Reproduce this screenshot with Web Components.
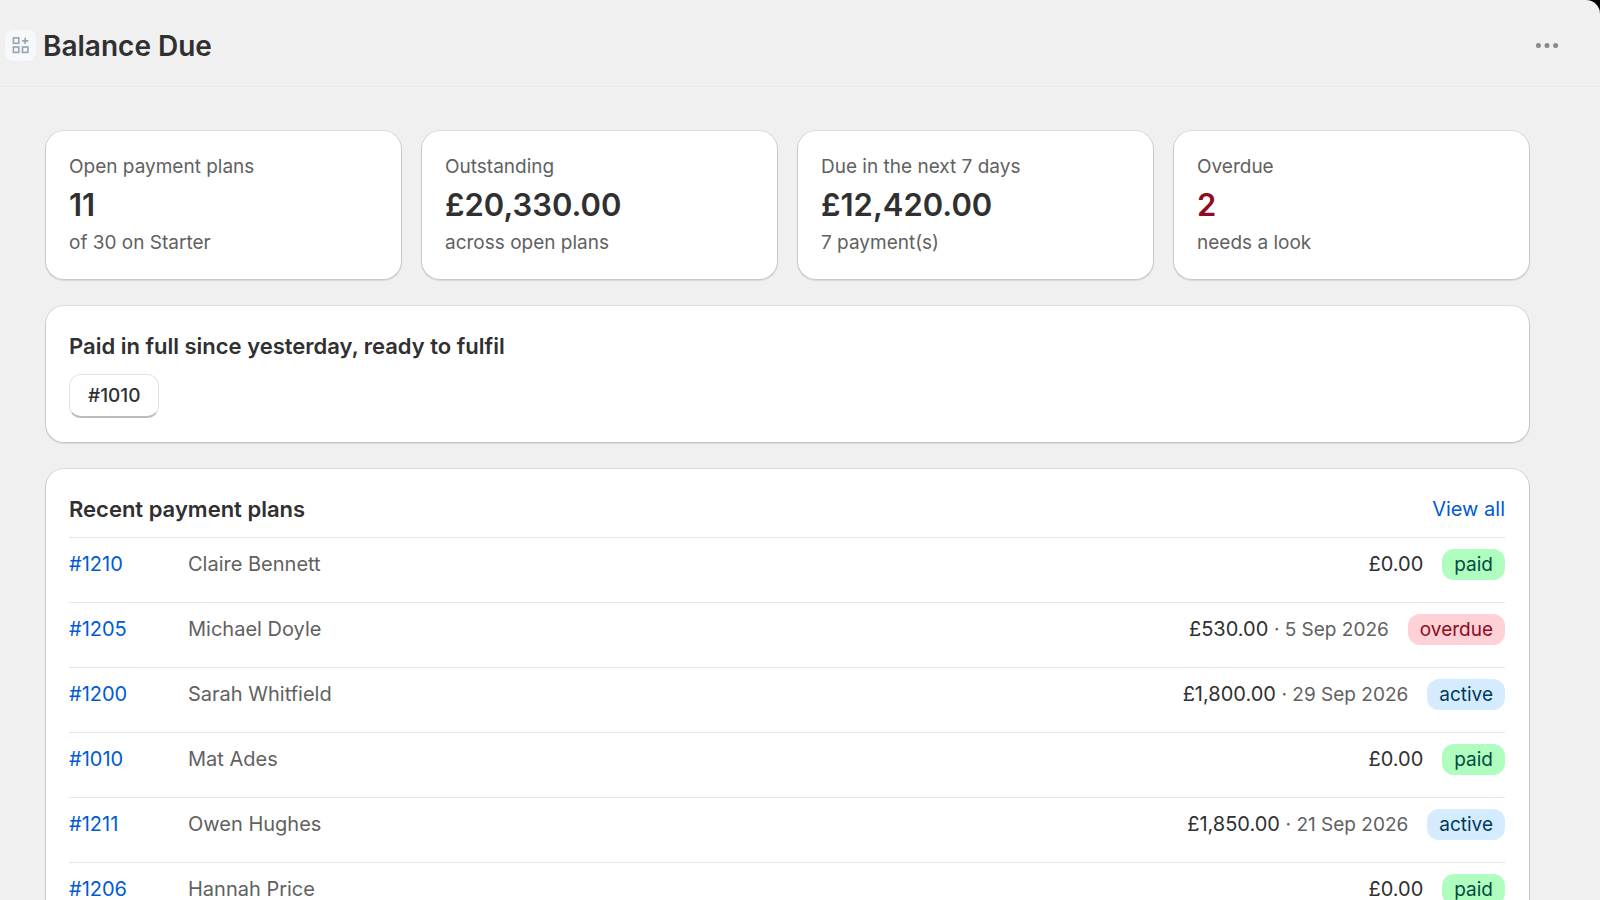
<!DOCTYPE html>
<html lang="en">
<head>
  <meta charset="UTF-8">
  <meta name="viewport" content="width=device-width, initial-scale=1.0">
  <title>Balance Due</title>
  <style>
    :root {
      --bg: #f0f0f0;
      --surface: #fff;
      --text: #303030;
      --text-subdued: #616161;
      --text-critical: #8e0b21;
      --link: #005bd3;
      --divider: #e6e6e6;
    }
    body {
      margin: 0;
      background: #000;
      color: var(--text);
      font-family: Inter, "Liberation Sans", sans-serif;
      font-size: 20px;
      line-height: 32px;
    }
  </style>
</head>
<body>
  <app-frame>
    <title-bar slot="header">Balance Due</title-bar>
    <stat-grid>
      <stat-card label="Open payment plans" note="of 30 on Starter">11</stat-card>
      <stat-card label="Outstanding" note="across open plans">£20,330.00</stat-card>
      <stat-card label="Due in the next 7 days" note="7 payment(s)">£12,420.00</stat-card>
      <stat-card label="Overdue" note="needs a look" tone="critical">2</stat-card>
    </stat-grid>
    <section-card heading="Paid in full since yesterday, ready to fulfil">
      <order-button>#1010</order-button>
    </section-card>
    <section-card heading="Recent payment plans">
      <text-link slot="action" to="#plans">View all</text-link>
      <plans-table></plans-table>
    </section-card>
  </app-frame>

  <template id="appFrameTemplate">
    <style>
      :host {
        display: flex;
        flex-direction: column;
        height: 100vh;
        overflow: hidden;
        background: var(--bg);
        border-top-right-radius: 14px;
      }
      main {
        flex: 1;
        min-height: 0;
        display: flex;
        flex-direction: column;
        gap: 27px;
        padding: 44px 71px 44px 46px;
        overflow-y: auto;
        scrollbar-width: none;
      }
    </style>
    <slot name="header"></slot>
    <main><slot></slot></main>
  </template>

  <template id="titleBarTemplate">
    <style>
      :host {
        display: block;
      }
      header {
        display: flex;
        align-items: center;
        gap: 7px;
        height: 86px;
        padding: 0 37px 0 5px;
        border-bottom: 1px solid #e8e8e8;
      }
      .app-icon {
        display: flex;
        align-items: center;
        justify-content: center;
        width: 31px;
        height: 31px;
        margin-top: 5px;
        border-radius: 8px;
        background: #f6f8fa;
      }
      h1 {
        flex: 1;
        margin: 5px 0 0;
        font-size: 28px;
        font-weight: 600;
        line-height: 36px;
      }
      button {
        display: flex;
        margin: 5px 0 0;
        padding: 8px 4px;
        border: 0;
        background: none;
        cursor: pointer;
      }
    </style>
    <header>
      <span class="app-icon">
        <svg width="19" height="19" viewBox="0 0 19 19" fill="none" stroke="#97a3b4" stroke-width="1.6">
          <rect x="2.4" y="1.9" width="5.4" height="5.4"/>
          <rect x="2.4" y="11" width="5.4" height="5.4"/>
          <rect x="11.5" y="11" width="5.4" height="5.4"/>
          <path d="M14.2 1.8v6.2M11.1 4.9h6.2"/>
        </svg>
      </span>
      <h1><slot></slot></h1>
      <button type="button" aria-label="More actions">
        <svg width="24" height="6" viewBox="0 0 24 6" fill="#8a8a8a">
          <circle cx="3.4" cy="2.6" r="2.5"/>
          <circle cx="12" cy="2.6" r="2.5"/>
          <circle cx="20.6" cy="2.6" r="2.5"/>
        </svg>
      </button>
    </header>
  </template>

  <template id="statGridTemplate">
    <style>
      :host {
        display: grid;
        grid-template-columns: repeat(4, 1fr);
        gap: 21px;
      }
    </style>
    <slot></slot>
  </template>

  <template id="statCardTemplate">
    <style>
      :host {
        display: flex;
        flex-direction: column;
        gap: 4px;
        padding: 24px 24px 24px 23px;
        border-radius: 18px;
        background: var(--surface);
        box-shadow: 0 0 0 1px rgba(0, 0, 0, .07), 0 1px 1px 1px rgba(0, 0, 0, .1);
      }
      span {
        color: var(--text-subdued);
        font-size: 19px;
        line-height: 24px;
      }
      strong {
        font-size: 31px;
        font-weight: 600;
        line-height: 44px;
      }
      :host([tone="critical"]) strong {
        color: var(--text-critical);
      }
    </style>
    <span class="label"></span>
    <strong><slot></slot></strong>
    <span class="note"></span>
  </template>

  <template id="sectionCardTemplate">
    <style>
      :host {
        display: flex;
        flex-direction: column;
        gap: 12px;
        padding: 24px 24px 24px 23px;
        border-radius: 18px;
        background: var(--surface);
        box-shadow: 0 0 0 1px rgba(0, 0, 0, .07), 0 1px 1px 1px rgba(0, 0, 0, .1);
      }
      .head {
        display: flex;
        justify-content: space-between;
        align-items: center;
      }
      h2 {
        margin: 0;
        font-size: 22px;
        font-weight: 600;
        line-height: 32px;
      }
    </style>
    <div class="head">
      <h2></h2>
      <slot name="action"></slot>
    </div>
    <slot></slot>
  </template>

  <template id="orderButtonTemplate">
    <style>
      :host {
        display: flex;
      }
      button {
        height: 44px;
        padding: 0 18px;
        border: 1px solid #e3e3e3;
        border-bottom: 2px solid #bdbdbd;
        border-radius: 12px;
        background: var(--surface);
        color: var(--text);
        font: inherit;
        font-size: 19px;
        font-weight: 500;
        cursor: pointer;
      }
    </style>
    <button type="button"><slot></slot></button>
  </template>

  <template id="textLinkTemplate">
    <style>
      :host {
        display: inline;
      }
      a {
        color: var(--link);
        text-decoration: none;
      }
      a:hover {
        text-decoration: underline;
      }
    </style>
    <a><slot></slot></a>
  </template>

  <template id="statusBadgeTemplate">
    <style>
      :host {
        display: inline-block;
        padding: 0 12px;
        border-radius: 12px;
        font-size: 19px;
        line-height: 31px;
        background: #e3e3e3;
      }
      :host([status="paid"]) {
        background: #affebf;
        color: #014b40;
      }
      :host([status="overdue"]) {
        background: #fed1d7;
        color: #8e0b21;
      }
      :host([status="active"]) {
        background: #d5ebff;
        color: #003a5a;
      }
    </style>
    <slot></slot>
  </template>

  <template id="plansTableTemplate">
    <style>
      :host {
        display: block;
      }
      table {
        width: 100%;
        border-spacing: 0;
      }
      th, td {
        height: 31px;
        padding: 11px 0 22px;
        border-top: 1px solid var(--divider);
        font-weight: 400;
        line-height: 31px;
        text-align: left;
        vertical-align: top;
      }
      th {
        width: 119px;
      }
      .customer {
        color: var(--text-subdued);
      }
      .due {
        display: flex;
        justify-content: flex-end;
        gap: 19px;
      }
      small {
        color: var(--text-subdued);
        font-size: 19px;
      }
    </style>
    <table aria-label="Recent payment plans">
      <tbody></tbody>
    </table>
  </template>

  <script>
    const plans = [
      { order: '#1210', customer: 'Claire Bennett', amount: '£0.00', status: 'paid' },
      { order: '#1205', customer: 'Michael Doyle', amount: '£530.00', date: '5 Sep 2026', status: 'overdue' },
      { order: '#1200', customer: 'Sarah Whitfield', amount: '£1,800.00', date: '29 Sep 2026', status: 'active' },
      { order: '#1010', customer: 'Mat Ades', amount: '£0.00', status: 'paid' },
      { order: '#1211', customer: 'Owen Hughes', amount: '£1,850.00', date: '21 Sep 2026', status: 'active' },
      { order: '#1206', customer: 'Hannah Price', amount: '£0.00', status: 'paid' }
    ]

    // attaches an open shadow root filled from the template with the given id
    class TemplateElement extends HTMLElement {
      constructor() {
        super()
        const template = document.getElementById(this.constructor.template)
        this.attachShadow({ mode: 'open' }).appendChild(template.content.cloneNode(true))
      }
    }

    class AppFrame extends TemplateElement {
      static template = 'appFrameTemplate'
    }

    class TitleBar extends TemplateElement {
      static template = 'titleBarTemplate'
    }

    class StatGrid extends TemplateElement {
      static template = 'statGridTemplate'
    }

    class StatCard extends TemplateElement {
      static template = 'statCardTemplate'
      connectedCallback() {
        this.shadowRoot.querySelector('.label').textContent = this.getAttribute('label')
        this.shadowRoot.querySelector('.note').textContent = this.getAttribute('note')
      }
    }

    class SectionCard extends TemplateElement {
      static template = 'sectionCardTemplate'
      connectedCallback() {
        this.shadowRoot.querySelector('h2').textContent = this.getAttribute('heading')
      }
    }

    class OrderButton extends TemplateElement {
      static template = 'orderButtonTemplate'
    }

    class TextLink extends TemplateElement {
      static template = 'textLinkTemplate'
      connectedCallback() {
        this.shadowRoot.querySelector('a').href = this.getAttribute('to') || '#'
      }
    }

    class StatusBadge extends TemplateElement {
      static template = 'statusBadgeTemplate'
    }

    class PlansTable extends TemplateElement {
      static template = 'plansTableTemplate'
      connectedCallback() {
        this.shadowRoot.querySelector('tbody').innerHTML = plans.map(plan => `
          <tr>
            <th scope="row"><text-link to="${plan.order}">${plan.order}</text-link></th>
            <td class="customer">${plan.customer}</td>
            <td>
              <div class="due">
                <span>${plan.amount}${plan.date ? ` <small>· ${plan.date}</small>` : ''}</span>
                <status-badge status="${plan.status}">${plan.status}</status-badge>
              </div>
            </td>
          </tr>
        `).join('')
      }
    }

    window.customElements.define('app-frame', AppFrame)
    window.customElements.define('title-bar', TitleBar)
    window.customElements.define('stat-grid', StatGrid)
    window.customElements.define('stat-card', StatCard)
    window.customElements.define('section-card', SectionCard)
    window.customElements.define('order-button', OrderButton)
    window.customElements.define('text-link', TextLink)
    window.customElements.define('status-badge', StatusBadge)
    window.customElements.define('plans-table', PlansTable)
  </script>
</body>
</html>
